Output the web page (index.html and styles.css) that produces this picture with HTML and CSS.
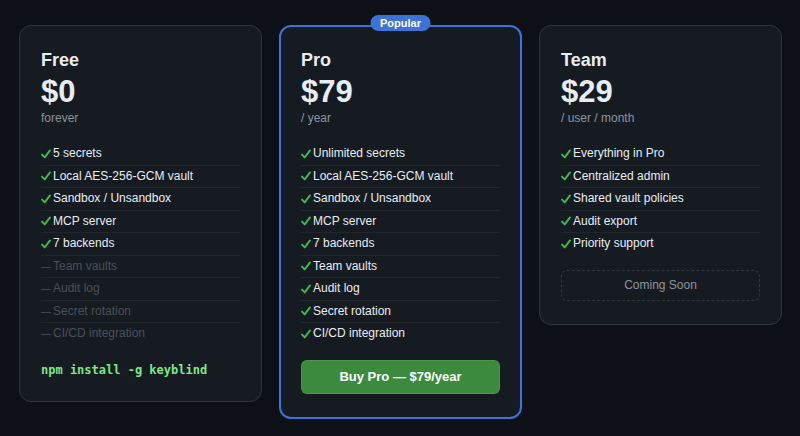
FILE: index.html
```html
<!DOCTYPE html>
<html lang="en">
<head>
<meta charset="utf-8">
<title>Pricing</title>
<link rel="stylesheet" href="styles.css">
</head>
<body>
<main class="plans">
  <section class="card">
    <h2 class="name">Free</h2>
    <div class="price">$0</div>
    <div class="period">forever</div>
    <ul class="features">
      <li class="on"><svg class="check" viewBox="0 0 10 10"><path d="M1 5.6 L3.7 8.4 L9 1.4"/></svg>5 secrets</li>
      <li class="on"><svg class="check" viewBox="0 0 10 10"><path d="M1 5.6 L3.7 8.4 L9 1.4"/></svg>Local AES-256-GCM vault</li>
      <li class="on"><svg class="check" viewBox="0 0 10 10"><path d="M1 5.6 L3.7 8.4 L9 1.4"/></svg>Sandbox / Unsandbox</li>
      <li class="on"><svg class="check" viewBox="0 0 10 10"><path d="M1 5.6 L3.7 8.4 L9 1.4"/></svg>MCP server</li>
      <li class="on"><svg class="check" viewBox="0 0 10 10"><path d="M1 5.6 L3.7 8.4 L9 1.4"/></svg>7 backends</li>
      <li class="off"><span class="dash">—</span>Team vaults</li>
      <li class="off"><span class="dash">—</span>Audit log</li>
      <li class="off"><span class="dash">—</span>Secret rotation</li>
      <li class="off"><span class="dash">—</span>CI/CD integration</li>
    </ul>
    <code class="install">npm install -g keyblind</code>
  </section>
  <section class="card featured">
    <span class="badge">Popular</span>
    <h2 class="name">Pro</h2>
    <div class="price">$79</div>
    <div class="period">/ year</div>
    <ul class="features">
      <li class="on"><svg class="check" viewBox="0 0 10 10"><path d="M1 5.6 L3.7 8.4 L9 1.4"/></svg>Unlimited secrets</li>
      <li class="on"><svg class="check" viewBox="0 0 10 10"><path d="M1 5.6 L3.7 8.4 L9 1.4"/></svg>Local AES-256-GCM vault</li>
      <li class="on"><svg class="check" viewBox="0 0 10 10"><path d="M1 5.6 L3.7 8.4 L9 1.4"/></svg>Sandbox / Unsandbox</li>
      <li class="on"><svg class="check" viewBox="0 0 10 10"><path d="M1 5.6 L3.7 8.4 L9 1.4"/></svg>MCP server</li>
      <li class="on"><svg class="check" viewBox="0 0 10 10"><path d="M1 5.6 L3.7 8.4 L9 1.4"/></svg>7 backends</li>
      <li class="on"><svg class="check" viewBox="0 0 10 10"><path d="M1 5.6 L3.7 8.4 L9 1.4"/></svg>Team vaults</li>
      <li class="on"><svg class="check" viewBox="0 0 10 10"><path d="M1 5.6 L3.7 8.4 L9 1.4"/></svg>Audit log</li>
      <li class="on"><svg class="check" viewBox="0 0 10 10"><path d="M1 5.6 L3.7 8.4 L9 1.4"/></svg>Secret rotation</li>
      <li class="on"><svg class="check" viewBox="0 0 10 10"><path d="M1 5.6 L3.7 8.4 L9 1.4"/></svg>CI/CD integration</li>
    </ul>
    <button class="buy">Buy Pro — $79/year</button>
  </section>
  <section class="card">
    <h2 class="name">Team</h2>
    <div class="price">$29</div>
    <div class="period">/ user / month</div>
    <ul class="features">
      <li class="on"><svg class="check" viewBox="0 0 10 10"><path d="M1 5.6 L3.7 8.4 L9 1.4"/></svg>Everything in Pro</li>
      <li class="on"><svg class="check" viewBox="0 0 10 10"><path d="M1 5.6 L3.7 8.4 L9 1.4"/></svg>Centralized admin</li>
      <li class="on"><svg class="check" viewBox="0 0 10 10"><path d="M1 5.6 L3.7 8.4 L9 1.4"/></svg>Shared vault policies</li>
      <li class="on"><svg class="check" viewBox="0 0 10 10"><path d="M1 5.6 L3.7 8.4 L9 1.4"/></svg>Audit export</li>
      <li class="on"><svg class="check" viewBox="0 0 10 10"><path d="M1 5.6 L3.7 8.4 L9 1.4"/></svg>Priority support</li>
    </ul>
    <div class="soon">Coming Soon</div>
  </section>
</main>
</body>
</html>
```

FILE: styles.css
```css
* { box-sizing: border-box; }
html, body { margin: 0; }
body {
  background: #0d1117;
  color: #e6edf3;
  font-family: "Liberation Sans", Arial, sans-serif;
  height: 436px;
  overflow: hidden;
}
.plans {
  display: flex;
  align-items: flex-start;
  gap: 17px;
  padding: 25px 18px 0 19px;
}
.card {
  flex: 1;
  min-width: 0;
  background: #161b22;
  border: 1px solid #30363d;
  border-radius: 12px;
  padding: 23px 21px 23px;
}
.card.featured {
  position: relative;
  border: 2px solid #3b73d9;
  padding: 22px 20px 23px;
}
.badge {
  position: absolute;
  top: -12px;
  left: 50%;
  transform: translateX(-50%);
  background: #3b73d9;
  color: #fff;
  font-size: 11px;
  font-weight: 700;
  line-height: 16px;
  padding: 0 10px;
  border-radius: 999px;
}
.name {
  margin: 0;
  font-size: 18px;
  line-height: 22px;
  font-weight: 700;
}
.price {
  margin-top: 3px;
  font-size: 31px;
  line-height: 36px;
  font-weight: 700;
}
.period {
  font-size: 12px;
  line-height: 16px;
  color: #8b949e;
}
.features {
  list-style: none;
  margin: 17px 0 0;
  padding: 0;
}
.features li {
  font-size: 12px;
  line-height: 21.5px;
  display: flex;
  align-items: center;
}
.features li + li { border-top: 1px solid #21262d; }
.check {
  flex: none;
  width: 10px;
  height: 10px;
  margin-right: 2px;
  fill: none;
  stroke: #3fb950;
  stroke-width: 1.9;
  stroke-linecap: round;
  stroke-linejoin: round;
}
.dash {
  flex: none;
  width: 12px;
  font-size: 10px;
}
.on { color: #e6edf3; }
.off { color: #484f58; }
.install {
  display: block;
  margin-top: 17px;
  font-family: "DejaVu Sans Mono", "Liberation Mono", monospace;
  font-size: 12px;
  font-weight: 700;
  line-height: 16px;
  color: #7ee787;
}
.buy {
  display: block;
  width: 100%;
  margin-top: 15px;
  height: 34px;
  background: #3b8a3e;
  color: #fff;
  border: 1px solid rgba(240, 246, 252, 0.1);
  border-radius: 6px;
  font-family: inherit;
  font-size: 13px;
  font-weight: 700;
}
.soon {
  margin-top: 15px;
  height: 31px;
  border: 1px dashed #30363d;
  border-radius: 6px;
  display: flex;
  align-items: center;
  justify-content: center;
  color: #8b949e;
  font-size: 12px;
}
```
